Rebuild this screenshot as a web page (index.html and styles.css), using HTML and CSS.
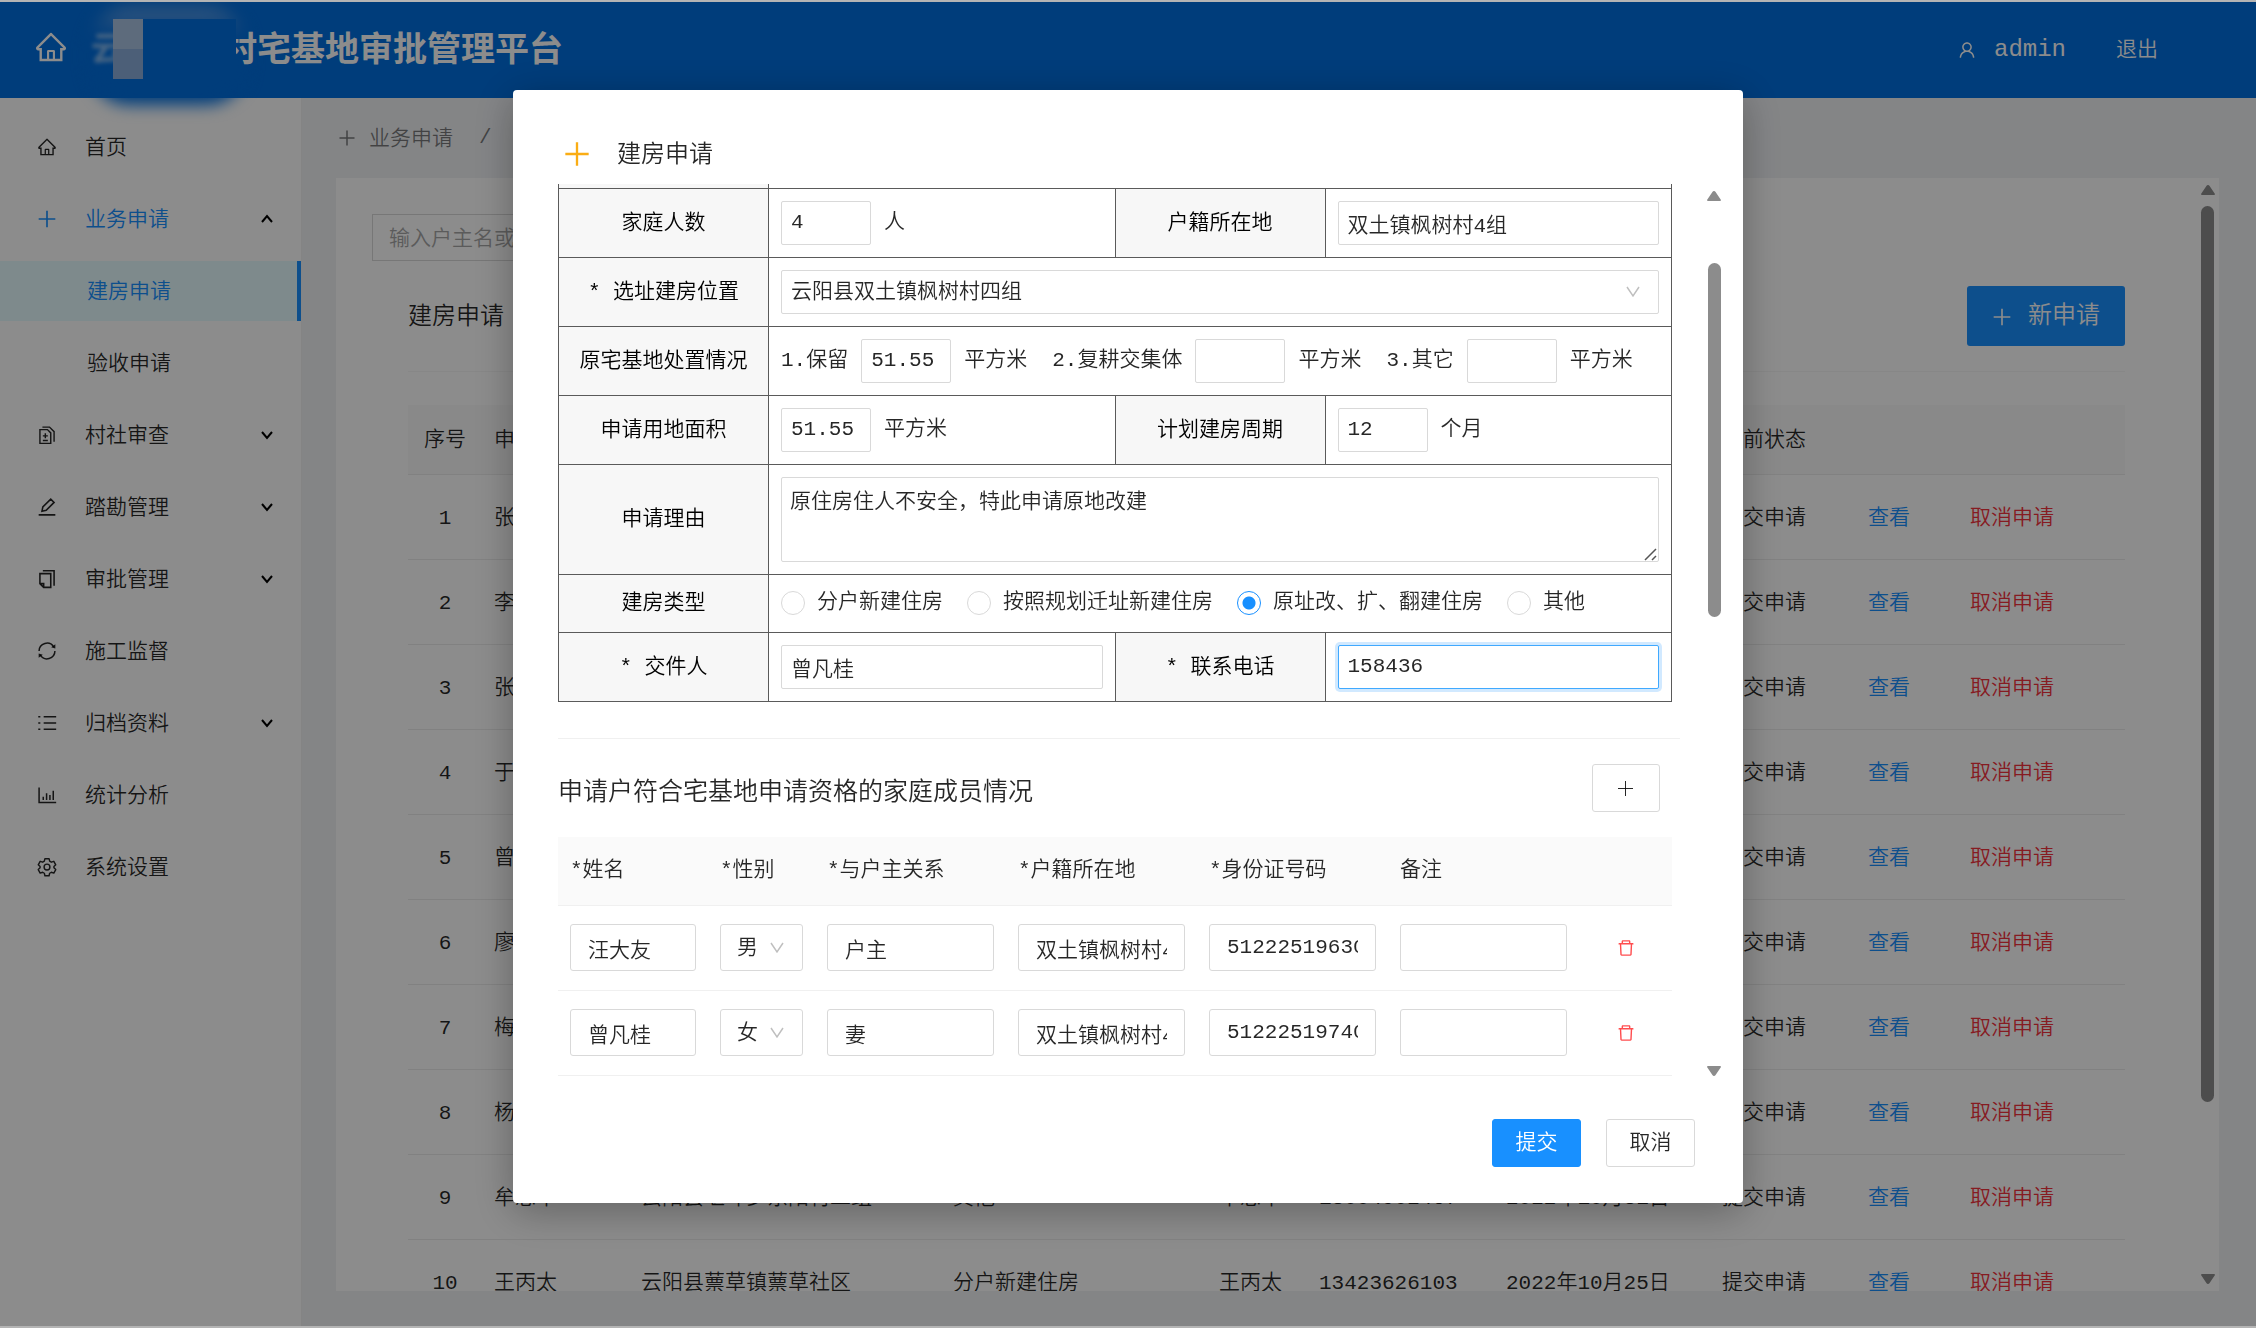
FILE: index.html
```html
<!DOCTYPE html>
<html lang="zh-CN">
<head>
<meta charset="utf-8">
<title>宅基地审批管理平台</title>
<link rel="stylesheet" href="styles.css">
</head>
<body>
<svg class="sprite" aria-hidden="true">
  <symbol id="i-home" viewBox="0 0 1024 1024"><path fill="currentColor" d="M946.5 505L560.1 118.8l-25.9-25.9a31.5 31.5 0 00-44.4 0L77.5 505a63.9 63.9 0 00-18.8 46c.4 35.2 29.7 63.3 64.9 63.3h42.5V940h691.8V614.3h43.4c17.1 0 33.2-6.7 45.3-18.8a63.6 63.6 0 0018.7-45.3c0-17-6.7-33.1-18.8-45.2zM568 868H456V664h112v204zm217.9-325.7V868H632V640c0-22.1-17.9-40-40-40H432c-22.1 0-40 17.9-40 40v228H238.1V542.3h-96l370-369.7 23.1 23.1L882 542.3h-96.1z"/></symbol>
  <symbol id="i-user" viewBox="0 0 1024 1024"><path fill="currentColor" d="M858.5 763.6a374 374 0 00-80.6-119.5 375.63 375.63 0 00-119.5-80.6c-.4-.2-.8-.3-1.2-.5C719.5 518 760 444.7 760 362c0-137-111-248-248-248S264 225 264 362c0 82.7 40.5 156 102.8 201.1-.4.2-.8.3-1.2.5-44.8 18.9-85 46-119.5 80.6a375.63 375.63 0 00-80.6 119.5A371.7 371.7 0 00136 901.8a8 8 0 008 8.2h60c4.4 0 7.9-3.5 8-7.8 2-77.2 33-149.5 87.8-204.3 56.7-56.7 132-87.9 212.2-87.9s155.5 31.2 212.2 87.9C779 752.7 810 825 812 902.2c.1 4.4 3.6 7.8 8 7.8h60a8 8 0 008-8.2c-1-47.8-10.9-94.3-29.5-138.2zM512 534c-45.9 0-89.1-17.9-121.6-50.4S340 407.9 340 362c0-45.9 17.9-89.1 50.4-121.6S466.1 190 512 190s89.1 17.9 121.6 50.4S684 316.1 684 362c0 45.9-17.9 89.1-50.4 121.6S557.9 534 512 534z"/></symbol>
  <symbol id="i-trash" viewBox="0 0 1024 1024"><path fill="currentColor" d="M360 184h-8c4.400 0 8-3.600 8-8v8h304v-8c0 4.400 3.600 8 8 8h-8v72h72v-80c0-35.300-28.700-64-64-64H352c-35.300 0-64 28.700-64 64v80h72v-72zm504 72H160c-17.700 0-32 14.300-32 32v32c0 4.400 3.600 8 8 8h60.400l24.700 523c1.600 34.100 29.800 61 63.900 61h454c34.200 0 62.300-26.800 63.900-61l24.700-523H888c4.400 0 8-3.600 8-8v-32c0-17.700-14.300-32-32-32zM731.300 840H292.700l-24.200-512h487l-24.200 512z"/></symbol>
  <symbol id="i-plus" viewBox="0 0 24 24"><path stroke="currentColor" stroke-width="2" fill="none" d="M12 2v20M2 12h20"/></symbol>
  <symbol id="i-plus-thin" viewBox="0 0 18 18"><path stroke="currentColor" stroke-width="1" fill="none" d="M8.500 1v15M1 8.500h15"/></symbol>
  <symbol id="i-files" viewBox="0 0 24 24"><path stroke="currentColor" stroke-width="1.700" fill="none" d="M3.500 5.500h9l4 4V22h-13zM6.500 2.500h8.500l5.500 5.500V20M10 10v6M7 13h6M7 18.500h6"/></symbol>
  <symbol id="i-edit" viewBox="0 0 24 24"><path stroke="currentColor" stroke-width="1.900" fill="none" d="M6 17l1-5 9.500-9.500 4 4L11 16zM2 21.500h20"/></symbol>
  <symbol id="i-copy" viewBox="0 0 24 24"><path stroke="currentColor" stroke-width="1.900" fill="none" d="M8 22l-4.500-4.500V5.500h13V22zM8 22v-4.500H3.500M7 2h13.500v18"/></symbol>
  <symbol id="i-sync" viewBox="0 0 24 24"><path stroke="currentColor" stroke-width="1.800" fill="none" d="M2.500 12a9.500 9.500 0 0 1 17.500-5M21.500 12a9.500 9.500 0 0 1-17.500 5"/><path fill="currentColor" d="M22 4v5l-5-1.500zM2 20v-5l5 1.500z"/></symbol>
  <symbol id="i-list" viewBox="0 0 24 24"><path stroke="currentColor" stroke-width="2" fill="none" d="M8 4.500h15M8 12h15M8 19.500h15M1.500 4.500h2.500M1.500 12h2.500M1.500 19.500h2.500"/></symbol>
  <symbol id="i-chart" viewBox="0 0 24 24"><path stroke="currentColor" stroke-width="1.800" fill="none" d="M2.500 3v18H23M7.500 18v-4M11.500 18V10M15.500 18v-6M19.500 18V7"/></symbol>
  <symbol id="i-gear" viewBox="0 0 24 24"><path stroke="currentColor" stroke-width="1.700" fill="none" stroke-linejoin="round" d="M9.500 2h5l.7 3 2 1.200 3-1 2.300 4.200-2.200 2.100v1.500l2.200 2.100-2.300 4.200-3-1-2 1.200-.7 3h-5l-.7-3-2-1.200-3 1-2.300-4.200 2.200-2.100v-1.500l-2.200-2.100 2.300-4.200 3 1 2-1.200z"/><circle cx="12" cy="12" r="3.500" stroke="currentColor" stroke-width="1.700" fill="none"/></symbol>
  <symbol id="i-down" viewBox="0 0 12 12"><path stroke="currentColor" stroke-width="2" fill="none" d="M1 3l5 6 5-6"/></symbol>
  <symbol id="i-up" viewBox="0 0 12 12"><path stroke="currentColor" stroke-width="2" fill="none" d="M1 9l5-6 5 6"/></symbol>
  <symbol id="i-tri-up" viewBox="0 0 14 10"><path fill="currentColor" d="M7 0q1 0 1.600 1L14 9q0 1-1 1H1Q0 10 0 9l5.400-8Q6 0 7 0z"/></symbol>
  <symbol id="i-tri-down" viewBox="0 0 14 10"><path fill="currentColor" d="M7 10q1 0 1.600-1L14 1q0-1-1-1H1Q0 0 0 1l5.400 8q.6 1 1.600 1z"/></symbol>
</svg>

<div class="app">
  <header class="topbar">
    <a class="topbar-home" href="#" aria-label="首页"><svg class="icon-lg"><use href="#i-home"/></svg></a>
    <h1 class="brand"><span class="brand-dim">云</span><span class="brand-gap"></span>村宅基地审批管理平台<span class="brand-mosaic"></span></h1>
    <a class="user" href="#"><svg class="icon"><use href="#i-user"/></svg>admin</a>
    <a class="logout" href="#">退出</a>
  </header>

  <div class="body">
    <nav class="sidebar">
      <a class="nav-item" href="#"><svg class="icon"><use href="#i-home"/></svg><span>首页</span></a>
      <a class="nav-item open" href="#"><svg class="icon"><use href="#i-plus"/></svg><span>业务申请</span><svg class="arrow"><use href="#i-up"/></svg></a>
      <a class="nav-item sub active" href="#"><span>建房申请</span></a>
      <a class="nav-item sub" href="#"><span>验收申请</span></a>
      <a class="nav-item" href="#"><svg class="icon"><use href="#i-files"/></svg><span>村社审查</span><svg class="arrow"><use href="#i-down"/></svg></a>
      <a class="nav-item" href="#"><svg class="icon"><use href="#i-edit"/></svg><span>踏勘管理</span><svg class="arrow"><use href="#i-down"/></svg></a>
      <a class="nav-item" href="#"><svg class="icon"><use href="#i-copy"/></svg><span>审批管理</span><svg class="arrow"><use href="#i-down"/></svg></a>
      <a class="nav-item" href="#"><svg class="icon"><use href="#i-sync"/></svg><span>施工监督</span></a>
      <a class="nav-item" href="#"><svg class="icon"><use href="#i-list"/></svg><span>归档资料</span><svg class="arrow"><use href="#i-down"/></svg></a>
      <a class="nav-item" href="#"><svg class="icon"><use href="#i-chart"/></svg><span>统计分析</span></a>
      <a class="nav-item" href="#"><svg class="icon"><use href="#i-gear"/></svg><span>系统设置</span></a>
    </nav>

    <main class="main">
      <div class="crumbs"><svg class="icon"><use href="#i-plus"/></svg><a href="#">业务申请</a><span class="slash">/</span></div>
      <section class="card">
        <div class="card-content">
          <input class="search" type="text" aria-label="搜索" placeholder="输入户主名或">
          <div class="card-head">
            <h2>建房申请</h2>
            <button class="btn-new" type="button"><svg class="icon"><use href="#i-plus"/></svg>新申请</button>
          </div>
          <table class="list">
            <colgroup><col class="l1"><col class="l2"><col class="l3"><col class="l4"><col class="l5"><col class="l6"><col class="l7"><col class="l8"><col class="l9"><col></colgroup>
            <thead><tr><th>序号</th><th>申</th><th></th><th></th><th></th><th></th><th></th><th>当前状态</th><th></th><th></th></tr></thead>
            <tbody>
              <tr><td>1</td><td>张</td><td></td><td></td><td></td><td></td><td></td><td>提交申请</td><td><a href="#">查看</a></td><td><a class="danger" href="#">取消申请</a></td></tr>
              <tr><td>2</td><td>李</td><td></td><td></td><td></td><td></td><td></td><td>提交申请</td><td><a href="#">查看</a></td><td><a class="danger" href="#">取消申请</a></td></tr>
              <tr><td>3</td><td>张</td><td></td><td></td><td></td><td></td><td></td><td>提交申请</td><td><a href="#">查看</a></td><td><a class="danger" href="#">取消申请</a></td></tr>
              <tr><td>4</td><td>于</td><td></td><td></td><td></td><td></td><td></td><td>提交申请</td><td><a href="#">查看</a></td><td><a class="danger" href="#">取消申请</a></td></tr>
              <tr><td>5</td><td>曾</td><td></td><td></td><td></td><td></td><td></td><td>提交申请</td><td><a href="#">查看</a></td><td><a class="danger" href="#">取消申请</a></td></tr>
              <tr><td>6</td><td>廖</td><td></td><td></td><td></td><td></td><td></td><td>提交申请</td><td><a href="#">查看</a></td><td><a class="danger" href="#">取消申请</a></td></tr>
              <tr><td>7</td><td>梅</td><td></td><td></td><td></td><td></td><td></td><td>提交申请</td><td><a href="#">查看</a></td><td><a class="danger" href="#">取消申请</a></td></tr>
              <tr><td>8</td><td>杨</td><td></td><td></td><td></td><td></td><td></td><td>提交申请</td><td><a href="#">查看</a></td><td><a class="danger" href="#">取消申请</a></td></tr>
              <tr><td>9</td><td>牟忠华</td><td>云阳县堰坪乡东阳村二组</td><td>其他</td><td>牟忠华</td><td>13004902467</td><td>2022年10月31日</td><td>提交申请</td><td><a href="#">查看</a></td><td><a class="danger" href="#">取消申请</a></td></tr>
              <tr><td>10</td><td>王丙太</td><td>云阳县蔈草镇蔈草社区</td><td>分户新建住房</td><td>王丙太</td><td>13423626103</td><td>2022年10月25日</td><td>提交申请</td><td><a href="#">查看</a></td><td><a class="danger" href="#">取消申请</a></td></tr>
            </tbody>
          </table>
        </div>
        <div class="scroll page-scroll" aria-hidden="true">
          <svg class="tri"><use href="#i-tri-up"/></svg>
          <div class="track"><div class="thumb"></div></div>
          <svg class="tri"><use href="#i-tri-down"/></svg>
        </div>
      </section>
    </main>
  </div>
</div>

<div class="mask">
  <form class="modal" role="dialog" aria-labelledby="dlg-title">
    <div class="modal-title"><svg class="icon"><use href="#i-plus"/></svg><h2 id="dlg-title">建房申请</h2></div>
    <div class="modal-body">
      <div class="viewport">
        <table class="form">
          <colgroup><col class="f1"><col class="f2"><col class="f1"><col class="f2"></colgroup>
          <tr class="cut"><th></th><td colspan="3"></td></tr>
          <tr>
            <th><label for="count">家庭人数</label></th>
            <td><div class="line"><input id="count" class="short" type="text" value="4">人</div></td>
            <th><label for="home">户籍所在地</label></th>
            <td><input id="home" type="text" value="双土镇枫树村4组"></td>
          </tr>
          <tr>
            <th><label for="site">* 选址建房位置</label></th>
            <td colspan="3"><select id="site"><option>云阳县双土镇枫树村四组</option></select></td>
          </tr>
          <tr>
            <th>原宅基地处置情况</th>
            <td colspan="3"><div class="line">
              <label for="keep">1.保留</label><input id="keep" class="short" type="text" value="51.55"><span class="unit">平方米</span>
              <label for="farm">2.复耕交集体</label><input id="farm" class="short" type="text"><span class="unit">平方米</span>
              <label for="other">3.其它</label><input id="other" class="short" type="text"><span>平方米</span>
            </div></td>
          </tr>
          <tr>
            <th><label for="area">申请用地面积</label></th>
            <td><div class="line"><input id="area" class="short" type="text" value="51.55">平方米</div></td>
            <th><label for="period">计划建房周期</label></th>
            <td><div class="line"><input id="period" class="short" type="text" value="12">个月</div></td>
          </tr>
          <tr>
            <th><label for="reason">申请理由</label></th>
            <td colspan="3"><textarea id="reason">原住房住人不安全，特此申请原地改建</textarea></td>
          </tr>
          <tr>
            <th>建房类型</th>
            <td colspan="3"><div class="radios">
              <label><input type="radio" name="type">分户新建住房</label>
              <label><input type="radio" name="type">按照规划迁址新建住房</label>
              <label><input type="radio" name="type" checked>原址改、扩、翻建住房</label>
              <label><input type="radio" name="type">其他</label>
            </div></td>
          </tr>
          <tr>
            <th><label for="sender">* 交件人</label></th>
            <td><input id="sender" type="text" value="曾凡桂"></td>
            <th><label for="phone">* 联系电话</label></th>
            <td><input id="phone" class="focused" type="text" value="158436"></td>
          </tr>
        </table>
        <hr class="divider">
        <div class="members-head">
          <h3>申请户符合宅基地申请资格的家庭成员情况</h3>
          <button class="btn btn-add" type="button" aria-label="添加"><svg class="icon"><use href="#i-plus-thin"/></svg></button>
        </div>
        <table class="members">
          <colgroup><col class="m1"><col class="m2"><col class="m3"><col class="m3"><col class="m3"><col class="m3"><col></colgroup>
          <thead><tr><th>*姓名</th><th>*性别</th><th>*与户主关系</th><th>*户籍所在地</th><th>*身份证号码</th><th>备注</th><th></th></tr></thead>
          <tbody>
            <tr>
              <td><input type="text" aria-label="姓名" value="汪大友"></td>
              <td><select aria-label="性别"><option>男</option></select></td>
              <td><input type="text" aria-label="与户主关系" value="户主"></td>
              <td><input type="text" aria-label="户籍所在地" value="双土镇枫树村4组"></td>
              <td><input type="text" aria-label="身份证号码" value="51222519630"></td>
              <td><input type="text" aria-label="备注"></td>
              <td><button class="btn-del" type="button" aria-label="删除"><svg class="icon"><use href="#i-trash"/></svg></button></td>
            </tr>
            <tr>
              <td><input type="text" aria-label="姓名" value="曾凡桂"></td>
              <td><select aria-label="性别"><option>女</option></select></td>
              <td><input type="text" aria-label="与户主关系" value="妻"></td>
              <td><input type="text" aria-label="户籍所在地" value="双土镇枫树村4组"></td>
              <td><input type="text" aria-label="身份证号码" value="51222519740"></td>
              <td><input type="text" aria-label="备注"></td>
              <td><button class="btn-del" type="button" aria-label="删除"><svg class="icon"><use href="#i-trash"/></svg></button></td>
            </tr>
          </tbody>
        </table>
      </div>
      <div class="scroll modal-scroll" aria-hidden="true">
        <svg class="tri"><use href="#i-tri-up"/></svg>
        <div class="track"><div class="thumb"></div></div>
        <svg class="tri"><use href="#i-tri-down"/></svg>
      </div>
    </div>
    <div class="modal-foot">
      <button class="btn primary" type="button">提交</button>
      <button class="btn" type="button">取消</button>
    </div>
  </form>
</div>
</body>
</html>
```
FILE: styles.css
```css
* { box-sizing: border-box; }

html { background: #b4b4b4; }

body {
  margin: 0;
  font: 350 21px/32px "Liberation Mono", "Noto Sans CJK SC", monospace;
  color: rgba(0, 0, 0, .85);
}

h1, h2, h3 { margin: 0; font-weight: inherit; }
a { color: inherit; text-decoration: none; }
input, select, textarea, button { font: inherit; color: inherit; margin: 0; }
table { border-spacing: 0; table-layout: fixed; width: 100%; }
svg { display: block; flex: none; }

.sprite { position: absolute; width: 0; height: 0; }
.icon { width: 20px; height: 20px; }
.icon-lg { width: 34px; height: 34px; }

/* frame */
.app {
  display: flex;
  flex-direction: column;
  height: calc(100vh - 4px);
  margin: 2px 0;
  overflow: hidden;
}

.topbar {
  display: flex;
  align-items: center;
  height: 96px;
  flex: none;
  padding: 0 98px 0 34px;
  background: #006fe0;
  color: #fff;
}
.topbar-home { padding-bottom: 6px; }

.brand {
  position: relative;
  z-index: 0;
  margin-left: 23px;
  padding-top: 4px;
  flex: 1;
  display: flex;
  font-size: 34px;
  line-height: 52px;
  font-weight: 700;
}
.brand-dim { opacity: .5; filter: blur(2px); }
.brand-gap { width: 98px; }
.brand::before {
  content: "";
  position: absolute;
  z-index: -1;
  left: -2px;
  top: -15px;
  width: 158px;
  height: 98px;
  border-radius: 40px;
  background: linear-gradient(#6ba3e4, #006fe0 30%);
  filter: blur(8px);
}
.brand-mosaic {
  position: absolute;
  left: 22px;
  top: -3px;
  width: 123px;
  height: 60px;
  background:
    linear-gradient(#a9c3e2 50%, #8aaeda 50%) 0 0 / 30px 100% no-repeat,
    #006fe0;
}

.user { display: flex; align-items: center; gap: 17px; font-size: 24px; margin-right: 50px; }
.logout { padding-top: 2px; font-size: 21px; }

.body { display: flex; flex: 1; min-height: 0; }

.sidebar {
  width: 302px;
  flex: none;
  padding-top: 19px;
  background: #fff;
  border-right: 1px solid #f0f0f0;
}
.nav-item {
  display: flex;
  align-items: center;
  height: 60px;
  margin-bottom: 12px;
  padding: 0 28px 0 37px;
}
.nav-item span { margin-left: 28px; padding-top: 3px; flex: 1; }
.nav-item.open { color: #1890ff; }
.nav-item.sub span { margin-left: 50px; }
.nav-item.active { color: #1890ff; background: #e6fbff; border-right: 4px solid #1890ff; }
.arrow { width: 12px; height: 12px; color: #000; }

.main {
  flex: 1;
  min-width: 0;
  display: flex;
  flex-direction: column;
  padding: 0 37px 35px 34px;
  background: #f0f2f5;
}
.crumbs {
  display: flex;
  align-items: center;
  height: 80px;
  padding: 0 2px;
  color: rgba(0, 0, 0, .5);
}
.crumbs .icon { width: 18px; }
.crumbs a { margin: 0 26px 0 13px; padding-top: 3px; }

.card { flex: 1; min-height: 0; display: flex; overflow: hidden; background: #fff; }
.card-content { flex: 1; min-width: 0; padding: 36px 73px 0 36px; }

.search {
  display: block;
  width: 420px;
  height: 47px;
  padding: 3px 16px 0;
  border: 1px solid #d9d9d9;
  background: #fff;
}
.search::placeholder { color: #a6a6a6; opacity: 1; }

.card-head {
  display: flex;
  align-items: center;
  justify-content: space-between;
  height: 111px;
  margin-left: 36px;
  border-bottom: 1px solid #f6f6f6;
  font-size: 24px;
}
.card-head h2 { padding-top: 3px; font-size: 24px; }
.btn-new {
  display: flex;
  align-items: center;
  justify-content: center;
  gap: 16px;
  width: 158px;
  height: 60px;
  padding: 2px 0 0;
  border: 0;
  border-radius: 3px;
  background: #1890ff;
  color: #fff;
  font-size: 24px;
}

.list { margin: 33px 0 0 36px; width: calc(100% - 36px); }
.list .l1 { width: 74px; }
.list .l2 { width: 147px; }
.list .l3 { width: 312px; }
.list .l4 { width: 266px; }
.list .l5 { width: 100px; }
.list .l6 { width: 187px; }
.list .l7 { width: 216px; }
.list .l8 { width: 146px; }
.list .l9 { width: 102px; }
.list th, .list td {
  padding: 3px 12px 0;
  border-bottom: 1px solid #ececec;
  text-align: left;
  font-weight: inherit;
  white-space: nowrap;
}
.list th { height: 70px; background: #fafafa; }
.list td { height: 85px; }
.list th:first-child, .list td:first-child { text-align: center; }
.list a { color: #1890ff; }
.list a.danger { color: #f5323c; }

/* scroll bars */
.scroll { display: flex; flex-direction: column; align-items: center; flex: none; color: #8c8c8c; }
.scroll .tri { width: 14px; height: 10px; }
.track { flex: 1; width: 13px; }
.thumb { border-radius: 7px; background: #8c8c8c; }
.page-scroll { width: 21px; padding: 7px 2px 7px 0; }
.page-scroll .thumb { margin-top: 11px; height: 83%; }
.modal-scroll { width: 32px; padding: 7px 0 0; }
.modal-scroll .thumb { margin-top: 62px; height: 41%; }

/* dialog */
.mask {
  position: fixed;
  z-index: 2;
  inset: 2px 0;
  padding-top: 88px;
  overflow: hidden;
  background: rgba(0, 0, 0, .45);
}
.modal {
  width: 1230px;
  max-width: 100%;
  margin: 0 auto;
  padding: 0 13px 36px 45px;
  border-radius: 4px;
  background: #fff;
  box-shadow: 0 8px 40px rgba(0, 0, 0, .3);
}
.modal-title {
  display: flex;
  align-items: center;
  gap: 26px;
  height: 94px;
  padding: 34px 0 0 5px;
}
.modal-title h2 { padding-top: 3px; font-size: 24px; }
.modal-title .icon { width: 28px; height: 28px; color: #faad14; }
.modal-body { display: flex; gap: 18px; }
.viewport { flex: 1; min-width: 0; }

.form { border-collapse: collapse; width: calc(100% - 8px); }
.form .f1 { width: 210px; }
.form th, .form td {
  border: 1px solid #5a5a5a;
  padding: 12px;
  height: 58px;
}
.form th { padding: 2px 0 0; background: #f7f7f7; font-weight: inherit; color: #000; }
.form .cut th, .form .cut td { height: 4px; padding: 0; border-top: 0; }
.form input[type="text"], .form select, .form textarea {
  display: block;
  width: 100%;
  height: 44px;
  padding: 0 9px;
  border: 1px solid #d9d9d9;
  border-radius: 2px;
  background-color: #fff;
  outline: 0;
}
.form select { padding-top: 3px; }
.form input[type="text"].short { width: 90px; }
.form input[type="text"].focused { border-color: #40a9ff; box-shadow: 0 0 0 3px rgba(24, 144, 255, .2); }
.form textarea { height: 85px; padding: 9px 8px; resize: vertical; }
.form textarea::-webkit-resizer {
  background: url("data:image/svg+xml,%3Csvg xmlns='http://www.w3.org/2000/svg' width='14' height='14' viewBox='0 0 14 14'%3E%3Cpath d='M1 13L12 2M8 13l4-4' fill='none' stroke='%23555' stroke-width='1.500'/%3E%3C/svg%3E") no-repeat center;
}
.form td:has(.radios) { padding: 0 12px; }

.line { display: flex; align-items: center; gap: 13px; white-space: nowrap; }
.line .unit { margin-right: 12px; }

.radios { display: flex; gap: 24px; white-space: nowrap; }
.radios label { display: flex; align-items: center; gap: 12px; }
.radios input {
  appearance: none;
  width: 24px;
  height: 24px;
  border: 1px solid #d9d9d9;
  border-radius: 50%;
}
.radios input:checked {
  border-color: #1890ff;
  background: radial-gradient(circle, #1890ff 6px, #fff 7px);
}

select {
  appearance: none;
  background: #fff url("data:image/svg+xml,%3Csvg xmlns='http://www.w3.org/2000/svg' width='14' height='12' viewBox='0 0 14 12'%3E%3Cpath d='M1 1l6 9 6-9' fill='none' stroke='%23bfbfbf' stroke-width='1.500'/%3E%3C/svg%3E") no-repeat right 18px center;
}

.divider { height: 1px; margin: 36px 0 25px; border: 0; background: #f0f0f0; }

.members-head {
  display: flex;
  align-items: center;
  justify-content: space-between;
  padding-right: 20px;
  margin-bottom: 25px;
}
.members-head h3 { padding-top: 12px; font-size: 25px; }

.btn {
  height: 48px;
  width: 89px;
  padding: 2px 0 0;
  border: 1px solid #d9d9d9;
  border-radius: 3px;
  background: #fff;
}
.btn.primary { border-color: #1890ff; background: #1890ff; color: #fff; }
.btn-add { display: flex; align-items: center; justify-content: center; width: 68px; }
.btn-add .icon { width: 18px; height: 18px; }

.members { width: calc(100% - 8px); border-bottom: 1px solid #f0f0f0; }
.members .m1 { width: 150px; }
.members .m2 { width: 107px; }
.members .m3 { width: 191px; }
.members th { height: 68px; padding: 0 12px; background: #fafafa; font-weight: inherit; text-align: left; }
.members td { height: 85px; padding: 0 12px; border-top: 1px solid #f0f0f0; }
.members input, .members select {
  display: block;
  width: 100%;
  height: 47px;
  padding: 0 17px;
  border: 1px solid #d9d9d9;
  border-radius: 3px;
  outline: 0;
}
.members select { padding: 2px 36px 0 16px; }
.btn-del { display: block; margin: 0 auto; padding: 0; border: 0; background: none; color: #ff4d4f; }

.modal-foot {
  display: flex;
  justify-content: flex-end;
  gap: 25px;
  margin-top: 43px;
  padding-right: 35px;
}
```
